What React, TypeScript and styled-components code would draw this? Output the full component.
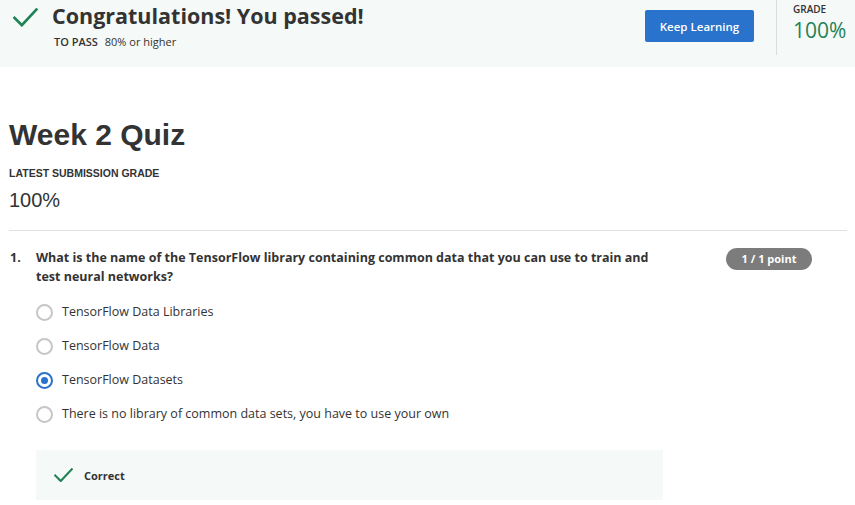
import styled, {createGlobalStyle} from "styled-components";

const GlobalStyle = createGlobalStyle`
    body {
        margin: 0;
        background: #ffffff;
        font-family: "Open Sans", "Liberation Sans", sans-serif;
        color: #333333;
    }
`;

const options = [
    'TensorFlow Data Libraries',
    'TensorFlow Data',
    'TensorFlow Datasets',
    'There is no library of common data sets, you have to use your own',
];

function CheckIcon(props: {size: number}) {
    return (
        <svg width={props.size} height={props.size * 0.75} viewBox="0 0 24 18" fill="none">
            <path d="M1.5 9.5 L8.5 16.5 L22.5 1.5" stroke="#1f8354" strokeWidth="2.6" strokeLinecap="square"/>
        </svg>
    );
}

export default function App() {
    return (
        <Page>
            <GlobalStyle/>
            <Banner>
                <BannerIcon><CheckIcon size={25}/></BannerIcon>
                <BannerText>
                    <BannerTitle>Congratulations! You passed!</BannerTitle>
                    <PassLine><b>TO PASS</b> 80% or higher</PassLine>
                </BannerText>
                <KeepButton>Keep Learning</KeepButton>
                <GradeBox>
                    <GradeLabel>GRADE</GradeLabel>
                    <GradeValue>100%</GradeValue>
                </GradeBox>
            </Banner>
            <Main>
                <QuizTitle>Week 2 Quiz</QuizTitle>
                <SubLabel>LATEST SUBMISSION GRADE</SubLabel>
                <SubValue>100%</SubValue>
                <Divider/>
                <Question>
                    <QNumber>1.</QNumber>
                    <QBody>
                        <QHead>
                            <QText>What is the name of the TensorFlow library containing common data that you can use to train and test neural networks?</QText>
                            <Points>1 / 1 point</Points>
                        </QHead>
                        <OptionList>
                            {options.map((o, i) => (
                                <Option key={o}>
                                    <Radio checked={i === 2}/>
                                    <span>{o}</span>
                                </Option>
                            ))}
                        </OptionList>
                        <Feedback>
                            <CheckIcon size={19}/>
                            <span>Correct</span>
                        </Feedback>
                    </QBody>
                </Question>
            </Main>
        </Page>
    );
}

const Page = styled.div`
    width: 855px;
    height: 505px;
    overflow: hidden;
`;

const Banner = styled.div`
    height: 67px;
    background: #f5f9f8;
    display: flex;
    align-items: flex-start;
    box-sizing: border-box;
    padding-left: 13px;
`;

const BannerIcon = styled.div`
    padding-top: 8px;
    width: 39px;
    flex: none;
`;

const BannerText = styled.div`
    flex: 1;
    padding-top: 1px;
`;

const BannerTitle = styled.div`
    font-size: 21.5px;
    font-weight: 700;
    line-height: 30px;
    color: #333;
`;

const PassLine = styled.div`
    font-size: 11px;
    line-height: 14px;
    margin-top: 4px;
    padding-left: 2px;
    color: #333;
    b {
        font-weight: 600;
        margin-right: 4px;
    }
`;

const KeepButton = styled.button`
    margin-top: 10px;
    width: 109px;
    height: 32px;
    border: none;
    border-radius: 2px;
    background: #2a73cc;
    color: #fff;
    font-family: "Open Sans", sans-serif;
    font-size: 11.5px;
    font-weight: 600;
    flex: none;
`;

const GradeBox = styled.div`
    margin-left: 22px;
    height: 55px;
    border-left: 1px solid #dcdcdc;
    padding-left: 16px;
    width: 62px;
    flex: none;
`;

const GradeLabel = styled.div`
    font-size: 10px;
    font-weight: 600;
    line-height: 12px;
    margin-top: 3px;
`;

const GradeValue = styled.div`
    font-size: 21px;
    line-height: 26px;
    color: #1f8354;
    margin-top: 2px;
`;

const Main = styled.div`
    padding: 0 8px 0 9px;
`;

const QuizTitle = styled.h1`
    font-family: "Liberation Sans", Arial, sans-serif;
    font-weight: 700;
    font-size: 30px;
    line-height: 36px;
    margin: 50px 0 0;
    color: #333;
`;

const SubLabel = styled.div`
    font-family: "Liberation Sans", Arial, sans-serif;
    font-size: 10.5px;
    font-weight: 700;
    margin-top: 13px;
    line-height: 14px;
    color: #333;
`;

const SubValue = styled.div`
    font-family: "Liberation Sans", Arial, sans-serif;
    font-size: 20px;
    line-height: 24px;
    margin-top: 8px;
    color: #333;
`;

const Divider = styled.hr`
    border: none;
    border-top: 1px solid #e1e1e1;
    margin: 18px 0 0;
`;

const Question = styled.div`
    display: flex;
    padding-top: 17px;
    font-size: 12.5px;
`;

const QNumber = styled.div`
    width: 26px;
    flex: none;
    font-weight: 700;
    line-height: 19px;
    padding-left: 1px;
`;

const QBody = styled.div`
    flex: 1;
`;

const QHead = styled.div`
    display: flex;
    justify-content: space-between;
    align-items: flex-start;
`;

const QText = styled.div`
    width: 630px;
    font-weight: 700;
    line-height: 19px;
`;

const Points = styled.div`
    margin-right: 35px;
    background: #7c7c7c;
    color: #fff;
    border-radius: 11px;
    height: 22px;
    line-height: 22px;
    width: 86px;
    text-align: center;
    font-size: 11px;
    font-weight: 700;
`;

const OptionList = styled.div`
    display: flex;
    flex-direction: column;
    gap: 14px;
    margin-top: 16px;
`;

const Option = styled.div`
    display: flex;
    align-items: center;
    height: 20px;
    line-height: 20px;
    color: #333;
`;

const Radio = styled.span<{checked: boolean}>`
    width: 17px;
    height: 17px;
    box-sizing: border-box;
    border-radius: 50%;
    border: 2px solid ${p => p.checked ? '#2a73cc' : '#c6c6c6'};
    margin-right: 9px;
    flex: none;
    display: flex;
    align-items: center;
    justify-content: center;
    &::after {
        content: "";
        width: 7px;
        height: 7px;
        border-radius: 50%;
        background: ${p => p.checked ? '#2a73cc' : 'transparent'};
    }
`;

const Feedback = styled.div`
    margin-top: 26px;
    width: 627px;
    height: 50px;
    background: #f5f9f8;
    display: flex;
    align-items: center;
    gap: 11px;
    padding-left: 18px;
    box-sizing: border-box;
    font-size: 11px;
    font-weight: 700;
`;
